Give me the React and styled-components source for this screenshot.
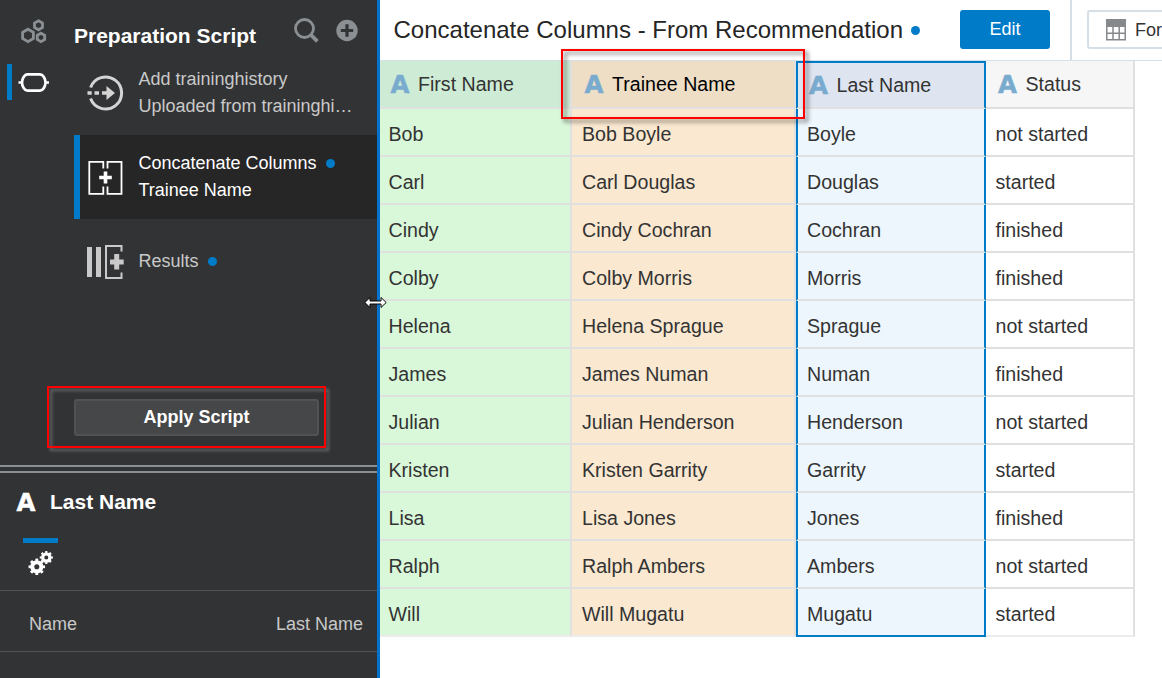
import React from "react";
import styled, { createGlobalStyle, css } from "styled-components";

const GlobalStyle = createGlobalStyle`
  * { box-sizing: border-box; }
  body {
    margin: 0;
    overflow: hidden;
    font-family: "Liberation Sans", Arial, sans-serif;
    background: #fff;
  }
`;

const Page = styled.div`
  position: relative;
  display: flex;
  width: 1162px;
  height: 678px;
  overflow: hidden;
`;

const Sidebar = styled.aside`
  display: flex;
  flex-direction: column;
  flex: 0 0 380px;
  background: #323334;
  border-right: 3px solid #0572ce;
`;

const ScriptArea = styled.section`
  display: flex;
  height: 465px;
`;

const Rail = styled.nav`
  flex: 0 0 74px;
  padding-top: 16px;
`;

const RailItem = styled.div`
  display: flex;
  align-items: center;
  height: ${(p) => (p.$active ? 36 : 29)}px;
  margin: ${(p) => (p.$active ? "19px 0 0 7px" : "0 0 0 20px")};
  padding: ${(p) => (p.$active ? "2px 0 0 6px" : "0")};
  border-left: ${(p) => (p.$active ? "5px solid #007bc8" : "0")};
`;

const ScriptPanel = styled.div`
  display: flex;
  flex-direction: column;
  flex: 1;
  min-width: 0;
`;

const PanelHeader = styled.header`
  display: flex;
  align-items: flex-start;
  height: 51px;
  padding: 17px 19px 0 0;
`;

const PanelTitle = styled.h1`
  flex: 1;
  margin: 6px 0 0;
  color: #fff;
  font-size: 21px;
  line-height: 25px;
  font-weight: 700;
`;

const PanelTools = styled.div`
  display: flex;
  gap: 15px;
`;

const Step = styled.div`
  display: flex;
  align-items: center;
  height: 84px;
  padding-left: ${(p) => (p.$active ? 6 : 12)}px;
  border-left: ${(p) => (p.$active ? "6px solid #007bc8" : "0")};
  background: ${(p) => (p.$active ? "#262626" : "transparent")};
  color: ${(p) => (p.$active ? "#fff" : "#c9c9c9")};
`;

const StepText = styled.div`
  margin-left: 14.5px;
  font-size: 18px;
  line-height: 27px;
  white-space: nowrap;
`;

const Dot = styled.span`
  display: inline-block;
  width: 9px;
  height: 9px;
  margin-left: ${(p) => p.$gap || 9.5}px;
  border-radius: 50%;
  background: #007bc8;
  vertical-align: ${(p) => p.$lift || 1}px;
`;

const ApplyButton = styled.button`
  width: 245px;
  height: 37px;
  margin: 96px 0 0;
  padding: 0;
  border: 2px solid #505253;
  border-radius: 3px;
  background: #464748;
  color: #fff;
  font: 700 18px "Liberation Sans", Arial, sans-serif;
`;

const Splitter = styled.div`
  height: 8px;
  border-top: 2px solid #8a8f93;
  border-bottom: 2px solid #8a8f93;
`;

const PropsHeader = styled.header`
  display: flex;
  align-items: center;
  gap: 14px;
  height: 24px;
  margin: 17px 0 0 16px;
  color: #fff;
  font-size: 21px;
  font-weight: 700;
`;

const PropsTab = styled.div`
  width: 35px;
  height: 52px;
  margin: 24px 0 0 23px;
  padding: 7px 0 0 5px;
  border-top: 5px solid #007bc8;
`;

const PropsRow = styled.div`
  display: flex;
  justify-content: space-between;
  align-items: center;
  height: 62px;
  padding: 6px 14px 0 29px;
  border-top: 1px solid #525354;
  border-bottom: 1px solid #525354;
  color: #c9c9c9;
  font-size: 18px;
`;

const Main = styled.main`
  display: flex;
  flex-direction: column;
  flex: 1;
  min-width: 0;
`;

const TopBar = styled.header`
  display: flex;
  height: 61px;
  border-bottom: 1px solid #d6dfe6;
`;

const TopTitle = styled.h2`
  width: 580px;
  margin: 0;
  padding: 16px 0 0 13.5px;
  color: #252525;
  font-size: 24px;
  line-height: 28px;
  font-weight: 400;
  white-space: nowrap;
`;

const EditButton = styled.button`
  width: 90px;
  height: 39px;
  margin-top: 10px;
  padding: 0 0 1px;
  border: 0;
  border-radius: 3px;
  background: #007bc8;
  color: #fff;
  font: 18px "Liberation Sans", Arial, sans-serif;
`;

const FormatArea = styled.div`
  flex: 1;
  min-width: 0;
  margin-left: 20px;
  padding: 10px 0 0 15px;
  border-left: 2px solid #d6dfe6;
  overflow: hidden;
`;

const FormatButton = styled.button`
  display: flex;
  align-items: center;
  gap: 9px;
  width: 120px;
  height: 39px;
  padding: 2px 0 0 17px;
  border: 2px solid #d6dfe6;
  border-radius: 3px;
  background: #fff;
  color: #333;
  font: 18px "Liberation Sans", Arial, sans-serif;

  svg {
    margin-bottom: 2px;
  }
`;

const Table = styled.div`
  display: grid;
  grid-template-columns: 192px 224px 190px 149px;
  width: 755px;
  color: #333;
  font-size: 19.6px;
`;

const TONES = {
  green: ["#ceebd6", "#d9f7d9"],
  orange: ["#eedec6", "#fae8d0"],
  blue: ["#dee5f1", "#eef6fd"],
  plain: ["#f6f6f6", "#ffffff"],
};

const cellFrame = css`
  border: 0 solid #e0e0e0;
  border-right-width: 2px;
  border-bottom-width: 2px;
  ${(p) =>
    p.$tone === "blue" &&
    css`
      border-left-width: 2px;
      border-left-color: #007bc8;
      border-right-color: #007bc8;
    `}
`;

const HeadCell = styled.div`
  display: flex;
  align-items: center;
  gap: 8px;
  height: 48px;
  padding-left: ${(p) => p.$inset}px;
  background: ${(p) => TONES[p.$tone][0]};
  ${cellFrame}
  ${(p) => p.$tone === "blue" && "border-top: 2px solid #007bc8;"}
  ${(p) => p.$tone === "orange" && "color: #000;"}
`;

const Cell = styled.div`
  height: 48px;
  padding-left: ${(p) => p.$inset}px;
  line-height: 51px;
  white-space: nowrap;
  background: ${(p) => TONES[p.$tone][1]};
  ${cellFrame}
  ${(p) => p.$last && `border-bottom-color: ${p.$tone === "blue" ? "#007bc8" : "#ececec"};`}
`;

const TypeMark = styled.span`
  display: flex;
  justify-content: center;
  width: 20px;
  padding-top: 1px;
  color: ${(p) => p.$color || "#79abcf"};
  font: 700 24.5px/24px "DejaVu Sans", sans-serif;
  -webkit-text-stroke: 0.5px currentColor;
`;

const Callout = styled.div`
  position: absolute;
  border: 2px solid #f00;
  pointer-events: none;
`;

const ColumnCallout = styled(Callout)`
  left: 561px;
  top: 49px;
  width: 244px;
  height: 70px;
  filter: drop-shadow(3px 3px 2px rgba(0, 0, 0, 0.55));
`;

const ApplyCallout = styled(Callout)`
  left: 47px;
  top: 386px;
  width: 279px;
  height: 62px;
  filter: drop-shadow(3px 3px 1.5px #6a6c6c);
`;

const ResizeCursor = styled.svg`
  position: absolute;
  left: 364px;
  top: 296px;
`;

const HexIcon = () => (
  <svg width="27" height="27" viewBox="0 0 27 27" fill="none" stroke="#8a8f93" strokeWidth="2.8">
    <path d="M8 12.200l5.400 3.100v6.200L8 24.600l-5.400-3.100v-6.200z" />
    <path d="M18.500 3.800l4 2.300v4.400l-4 2.300-4-2.300V6.100z" />
    <path d="M21 16.200l3.700 2.100v4.200L21 24.600l-3.700-2.100v-4.200z" />
  </svg>
);

const NodeIcon = () => (
  <svg width="32" height="22" viewBox="0 0 32 22" fill="none" stroke="#fff" strokeWidth="2.7">
    <path d="M9.500 2.300h12.500c3 0 5.500 4.500 5.500 8.200s-2.500 8.200-5.500 8.200H9.500c-3 0-5.500-4.500-5.500-8.200s2.500-8.200 5.500-8.200zM.5 10.500h4M27 10.500h4" />
  </svg>
);

const SearchIcon = () => (
  <svg width="26" height="26" viewBox="0 0 26 26" fill="none" stroke="#8a8f93">
    <circle cx="11.500" cy="11.500" r="9" strokeWidth="2.800" />
    <path d="M17.700 17.700l6.700 6.700" strokeWidth="3.800" />
  </svg>
);

const AddIcon = () => (
  <svg width="24" height="26" viewBox="0 0 24 26">
    <circle cx="13" cy="13.500" r="10.700" fill="#8a8f93" />
    <path d="M13 7.300v12.400M6.800 13.500h12.400" stroke="#323334" strokeWidth="3.200" />
  </svg>
);

const UploadIcon = () => (
  <svg width="38" height="38" viewBox="0 0 38 38">
    <path d="M4.600 13.500a16 16 0 1 1 0 11" fill="none" stroke="#d4d4d4" strokeWidth="3" />
    <path d="M1.500 17.300h4.200v3.500H1.500zM8.500 17.300h4.500v3.500H8.500zM16 17.300h4.500V12L29 19l-8.500 7V20.800H16z" fill="#d4d4d4" />
  </svg>
);

const ConcatIcon = () => (
  <svg width="38" height="38" viewBox="0 0 38 38" fill="none" stroke="#fff" strokeWidth="1.800">
    <path d="M17.300 10.500V3.800H3.300v32h14v-7.300M21.500 10.500V3.800h14v32h-14v-7.300" />
    <path d="M19.500 13.500v12M13.200 19.500h12.600" strokeWidth="3.600" />
  </svg>
);

const ResultsIcon = () => (
  <svg width="38" height="38" viewBox="0 0 38 38" fill="none" stroke="#c9c9c9">
    <path d="M3.500 5v30M12.500 5v30" strokeWidth="5" />
    <path d="M35.500 9.500V4H20v32h15.500v-5.500" strokeWidth="2" />
    <path d="M30.700 12v15.500M24 20h13.700" strokeWidth="5" />
  </svg>
);

const Gear = ({ cx, cy, r }) => (
  <g fill="none" stroke="#fff">
    <circle cx={cx} cy={cy} r={r * 0.56} strokeWidth={r * 0.5} />
    <circle
      cx={cx}
      cy={cy}
      r={r * 0.86}
      strokeWidth={r * 0.3}
      pathLength="80"
      strokeDasharray="5 5"
      strokeDashoffset="2.5"
    />
  </g>
);

const GearsIcon = () => (
  <svg width="26" height="26" viewBox="0 0 26 26">
    <Gear cx={8.800} cy={16.800} r={8.200} />
    <Gear cx={18.300} cy={7.500} r={6.500} />
  </svg>
);

const TableIcon = () => (
  <svg width="20" height="22" viewBox="0 0 20 22">
    <path d="M0 0h20v8H0z" fill="#85898c" />
    <path d="M.8 8v12.700h18.400V8M7 8v13M13.200 8v13M1 14.300h18" fill="none" stroke="#85898c" strokeWidth="1.500" />
  </svg>
);

const COLUMNS = [
  { key: "first", label: "First Name", tone: "green", headInset: 10, inset: 8.5 },
  { key: "trainee", label: "Trainee Name", tone: "orange", headInset: 12, inset: 10 },
  { key: "last", label: "Last Name", tone: "blue", headInset: 10.5, inset: 9 },
  { key: "status", label: "Status", tone: "plain", headInset: 11.5, inset: 9.5 },
];

const ROWS = [
  ["Bob", "Boyle", "not started"],
  ["Carl", "Douglas", "started"],
  ["Cindy", "Cochran", "finished"],
  ["Colby", "Morris", "finished"],
  ["Helena", "Sprague", "not started"],
  ["James", "Numan", "finished"],
  ["Julian", "Henderson", "not started"],
  ["Kristen", "Garrity", "started"],
  ["Lisa", "Jones", "finished"],
  ["Ralph", "Ambers", "not started"],
  ["Will", "Mugatu", "started"],
].map(([first, last, status]) => ({ first, last, status, trainee: `${first} ${last}` }));

export default function App() {
  return (
    <>
      <GlobalStyle />
      <Page>
        <Sidebar>
          <ScriptArea>
            <Rail>
              <RailItem><HexIcon /></RailItem>
              <RailItem $active><NodeIcon /></RailItem>
            </Rail>
            <ScriptPanel>
              <PanelHeader>
                <PanelTitle>Preparation Script</PanelTitle>
                <PanelTools><SearchIcon /><AddIcon /></PanelTools>
              </PanelHeader>
              <Step>
                <UploadIcon />
                <StepText>Add traininghistory<br />Uploaded from traininghi…</StepText>
              </Step>
              <Step $active>
                <ConcatIcon />
                <StepText>Concatenate Columns<Dot /><br />Trainee Name</StepText>
              </Step>
              <Step>
                <ResultsIcon />
                <StepText>Results<Dot /></StepText>
              </Step>
              <ApplyButton>Apply Script</ApplyButton>
            </ScriptPanel>
          </ScriptArea>
          <Splitter />
          <PropsHeader><TypeMark $color="#fff">A</TypeMark>Last Name</PropsHeader>
          <PropsTab><GearsIcon /></PropsTab>
          <PropsRow><span>Name</span><span>Last Name</span></PropsRow>
        </Sidebar>
        <Main>
          <TopBar>
            <TopTitle>Concatenate Columns - From Recommendation<Dot $gap={7.5} $lift={3} /></TopTitle>
            <EditButton>Edit</EditButton>
            <FormatArea><FormatButton><TableIcon />Format</FormatButton></FormatArea>
          </TopBar>
          <Table>
            {COLUMNS.map((c) => (
              <HeadCell key={c.key} $tone={c.tone} $inset={c.headInset}>
                <TypeMark>A</TypeMark>{c.label}
              </HeadCell>
            ))}
            {ROWS.map((row, i) =>
              COLUMNS.map((c) => (
                <Cell key={row.first + c.key} $tone={c.tone} $inset={c.inset} $last={i === ROWS.length - 1}>
                  {row[c.key]}
                </Cell>
              ))
            )}
          </Table>
        </Main>
        <ColumnCallout />
        <ApplyCallout />
        <ResizeCursor width="23" height="13" viewBox="0 0 23 13">
          <path d="M.8 6.500L6 1.500v3.500h11V1.500l5.200 5-5.200 5V8H6v3.500z" fill="#fff" stroke="#000" strokeWidth="1" />
        </ResizeCursor>
      </Page>
    </>
  );
}
